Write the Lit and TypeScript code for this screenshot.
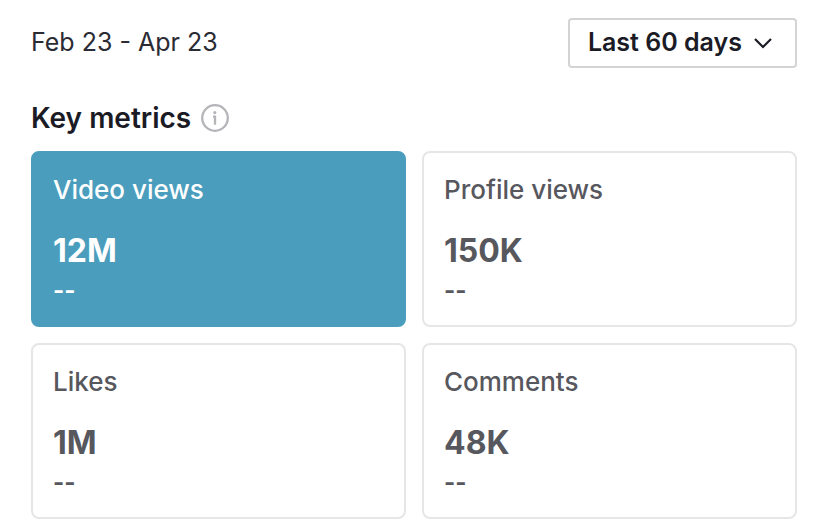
import { LitElement, html, css } from "lit";
import { customElement, state } from "lit/decorators.js";

interface Metric { label: string; value: string; change: string; }

const METRICS: Metric[] = [
  { label: "Video views", value: "12M", change: "--" },
  { label: "Profile views", value: "150K", change: "--" },
  { label: "Likes", value: "1M", change: "--" },
  { label: "Comments", value: "48K", change: "--" },
];

@customElement("app-root")
export class AppRoot extends LitElement {
  @state() private selected = 0;

  static styles = css`
    :host {
      display: block;
      box-sizing: border-box;
      padding: 18px 31px 13px;
      background: #fff;
      color: #1b1b25;
      font-family: Inter, "Liberation Sans", sans-serif;
    }
    * { box-sizing: border-box; }
    button { font: inherit; cursor: pointer; margin: 0; }
    .bar { display: flex; justify-content: space-between; align-items: center; }
    .dates { margin: 0; padding-bottom: 2px; font-size: 25px; line-height: 32px; color: #2b2b33; }
    .range {
      display: flex; align-items: center; gap: 11px;
      height: 50px; padding: 0 22px 0 18px;
      border: 2px solid #d4d4d6; border-radius: 4px;
      background: #fff; color: #1b1b25;
      font-size: 25px; line-height: 32px; font-weight: 600;
    }
    .range-text { padding-bottom: 2px; }
    .chevron { width: 20px; height: 12px; }
    .heading { display: flex; align-items: center; gap: 9px; margin-top: 32px; height: 36px; }
    h2 { margin: 0; font-size: 28px; line-height: 36px; font-weight: 600; }
    .info { display: flex; padding: 0; border: 0; background: none; }
    .info svg { width: 30px; height: 30px; }
    .grid { display: grid; grid-template-columns: 1fr 1fr; gap: 16px; margin-top: 15px; }
    .card {
      display: flex; flex-direction: column; align-items: flex-start;
      padding: 20px 20px 18px; border: 2px solid #e6e6e8; border-radius: 8px;
      background: #fff; color: #57575e; text-align: left;
    }
    .card.active { background: #4a9dbd; border-color: #4a9dbd; color: #fff; }
    .label { font-size: 26px; line-height: 34px; font-weight: 550; }
    .value { margin-top: 24px; font-size: 32px; line-height: 40px; font-weight: 700; }
    .change { margin-top: 4px; font-size: 24px; line-height: 32px; font-weight: 700; }
  `;

  render() {
    return html`
      <header class="bar">
        <p class="dates">Feb 23 - Apr 23</p>
        <button class="range" type="button" aria-haspopup="listbox">
          <span class="range-text">Last 60 days</span>
          <svg class="chevron" viewBox="0 0 20 12" fill="none" aria-hidden="true">
            <path d="M2 2L10 10L18 2" stroke="#1b1b25" stroke-width="2.2" />
          </svg>
        </button>
      </header>
      <main>
        <div class="heading">
          <h2>Key metrics</h2>
          <button class="info" type="button" aria-label="About key metrics">
            <svg viewBox="0 0 30 30" fill="none" aria-hidden="true">
              <circle cx="15" cy="15" r="12.8" stroke="#b5b5b9" stroke-width="2.3" />
              <circle cx="14.8" cy="9.6" r="1.6" fill="#b5b5b9" />
              <path d="M13 13.6H15V21.8" stroke="#b5b5b9" stroke-width="2.3" />
            </svg>
          </button>
        </div>
        <div class="grid">
          ${METRICS.map((m, i) => html`
            <button type="button" class="card ${i === this.selected ? "active" : ""}"
              aria-pressed=${i === this.selected ? "true" : "false"}
              @click=${() => { this.selected = i; }}>
              <span class="label">${m.label}</span>
              <span class="value">${m.value}</span>
              <span class="change">${m.change}</span>
            </button>`)}
        </div>
      </main>
    `;
  }
}
